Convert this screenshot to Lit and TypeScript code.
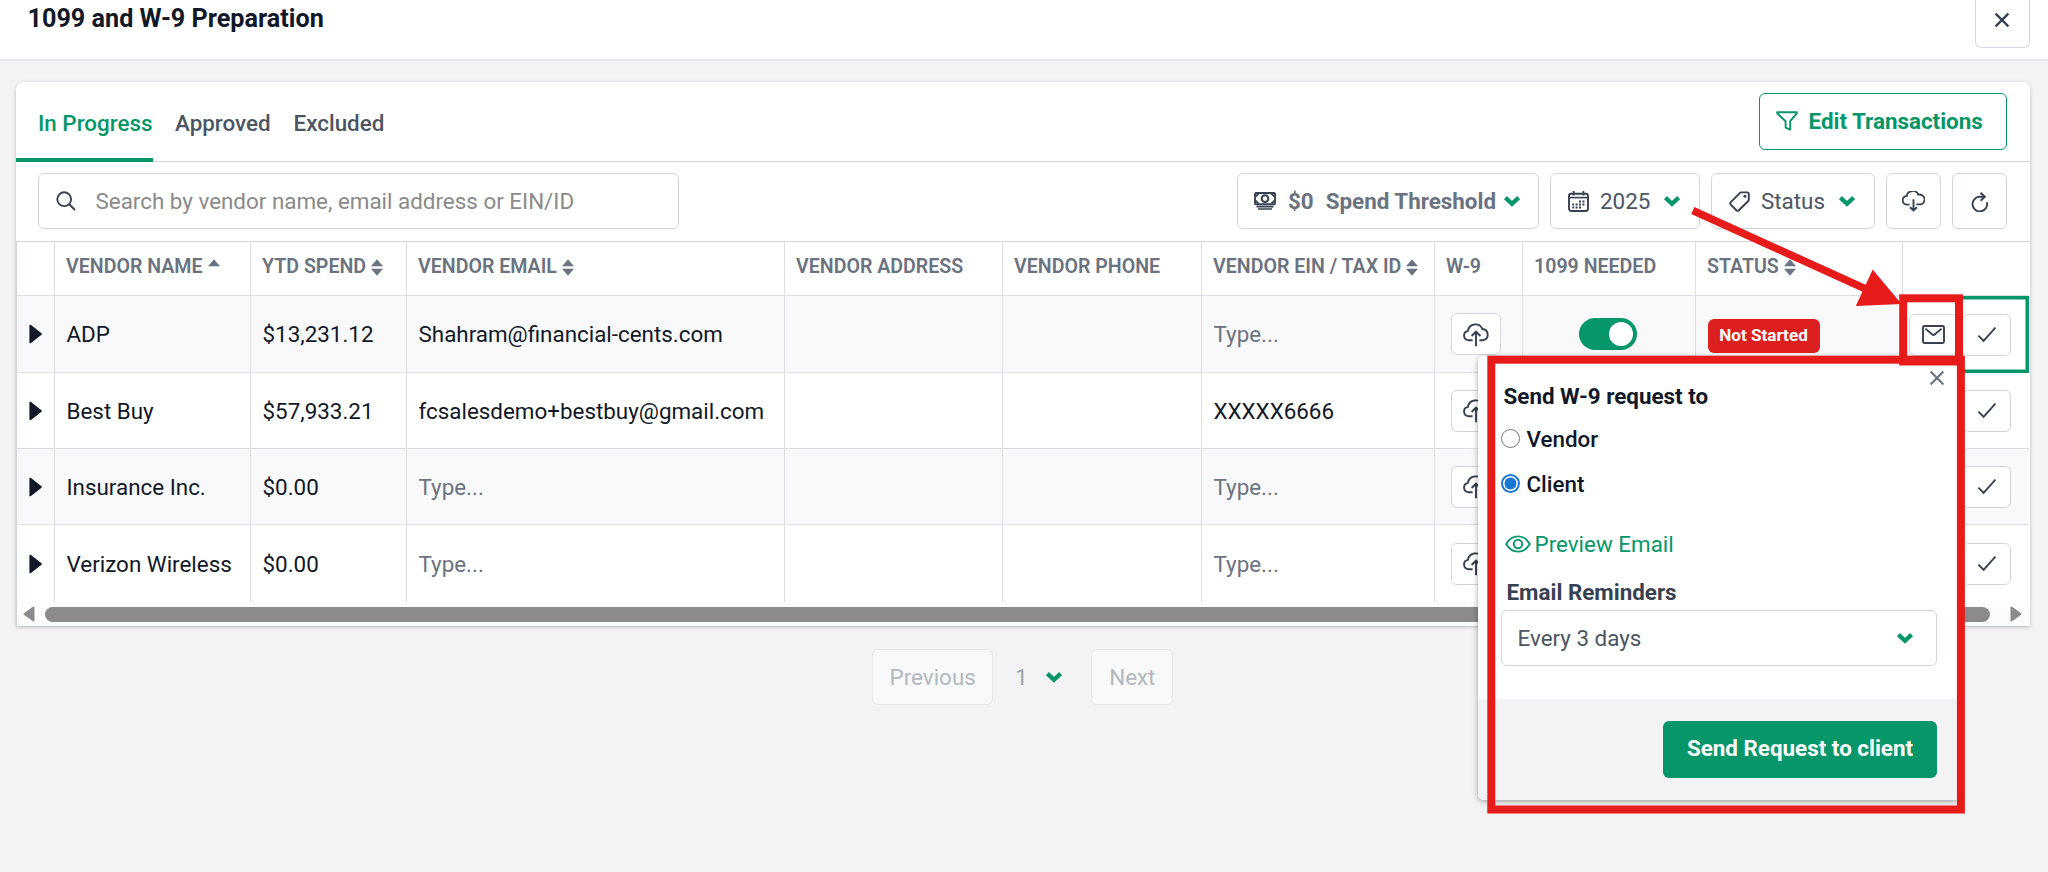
import { LitElement, html, css, svg, nothing } from "lit";
import { customElement } from "lit/decorators.js";
import { classMap } from "lit/directives/class-map.js";

const chevron = html`<svg class="chev" width="18" height="12" viewBox="0 0 18 12">
  <path d="M2.4 2.6 9 8.8 15.6 2.6" fill="none" stroke="#059669" stroke-width="4.2" stroke-linejoin="miter" />
</svg>`;

const icon = (name: string, w: number, h: number, body: unknown, vb = `0 0 ${w} ${h}`) =>
  html`<svg class="ico ${name}" width=${w} height=${h} viewBox=${vb}>${body}</svg>`;

const cross = (size: number, sw: number) =>
  icon("cross", size, size, svg`<path d="M1.5 1.5 13.5 13.5M13.5 1.5 1.5 13.5" stroke-width=${sw} />`, "0 0 15 15");

const cloudPath = "M8 15H5.6a4.4 4.4 0 0 1-.6-8.8A6.3 6.3 0 0 1 17 4.8a5.1 5.1 0 0 1 2.6 10.1H15";

const icons = {
  search: icon("", 20, 20, svg`<circle cx="8.2" cy="8.2" r="6.9" /><path d="M13 13l6 6" />`),
  filter: icon("", 22, 20, svg`<path d="M1.2 1.2h19.6v1.2l-6.6 7.8v8.4l-4.6-2v-6.4L1.2 2.4z" stroke-linejoin="round" />`),
  cash: icon("", 22, 18, svg`<rect x="1" y="1" width="20" height="11.2" rx="1" />
    <circle cx="11" cy="6.6" r="3.3" stroke-width="2" />
    <path d="M1.6 4.6 4.6 1.6M20.4 4.6 17.4 1.6M1.6 8.6 4.6 11.6M20.4 8.6 17.4 11.6" stroke-width="1.8" />
    <path d="M2.5 14.6h17M4 17h14" stroke-width="1.7" />`),
  calendar: icon("", 21, 21, svg`<rect x="1" y="2.8" width="19" height="17.2" rx="2.2" />
    <path d="M1.4 6.6h18.2" stroke-width="1.6"/><path d="M5.6 0v4.4M15.4 0v4.4" />
    <path d="M11 10.4h6.6M4.2 13.4h13.4M4.2 16.6h10.2" stroke-width="2" stroke-dasharray="2 1.4" />`),
  tag: icon("", 21, 21, svg`<path d="M12.2 1.4h6.2a1.4 1.4 0 0 1 1.4 1.4v6a1.6 1.6 0 0 1-.5 1.2L9.6 19.5a1.4 1.4 0 0 1-2 0L1.6 13.4a1.4 1.4 0 0 1 0-2L11 1.9a1.8 1.8 0 0 1 1.2-.5z" />
    <circle cx="15.9" cy="5.2" r="1.5" fill="currentColor" stroke="none" />`),
  download: icon("", 23, 21, svg`<path d=${cloudPath} transform="translate(-.2 -1) scale(.97)" /><path d="M11.5 8.2v11M8 16.2l3.5 3.3 3.5-3.3" />`),
  upload: icon("", 26, 25, svg`<path d="M9.6 18.2H5.4a4.7 4.7 0 0 1-.5-9.3A7.6 7.6 0 0 1 19.4 7a5.7 5.7 0 0 1 1 11.2h-4" /><path d="M13 24.2V10M8.6 14 13 9.7l4.4 4.3" />`),
  refresh: icon("", 18, 21, svg`<path d="M15.9 10.5A7.3 7.3 0 1 1 8.6 5h4.6" transform="translate(0 .8)" /><path d="M9.6 1.8 13.8 5.8 9.6 9.8" />`),
  mail: icon("", 23, 19, svg`<rect x="1" y="1" width="21" height="17" rx="1.4" /><path d="M3.4 3.6 10 9.2a2.2 2.2 0 0 0 3 0l6.6-5.6" />`),
  check: icon("", 20, 17, svg`<path d="M1.4 9.6 6.6 14.8 18.4 1.6" />`),
  eye: icon("", 26, 18, svg`<path d="M1.2 9C4 4.2 8.2 1.4 13 1.4S22 4.2 24.8 9C22 13.8 17.8 16.6 13 16.6S4 13.8 1.2 9z" /><circle cx="13" cy="9" r="4.2" />`),
};

const sort = (both: boolean) => html`<svg class="sort" width="12" height="17" viewBox="0 0 12 17">
  <path d="M6 .2 12 7.2H0z" />${both ? svg`<path d="M6 16.8 12 9.8H0z" />` : nothing}
</svg>`;

interface Column { label: string; sort?: "asc" | "both" }
const columns: Column[] = [
  { label: "" },
  { label: "Vendor Name", sort: "asc" },
  { label: "YTD Spend", sort: "both" },
  { label: "Vendor Email", sort: "both" },
  { label: "Vendor Address" },
  { label: "Vendor Phone" },
  { label: "Vendor EIN / Tax ID", sort: "both" },
  { label: "W-9" },
  { label: "1099 Needed" },
  { label: "Status", sort: "both" },
  { label: "" },
];

const vendors = [
  { name: "ADP", spend: "$13,231.12", email: "Shahram@financial-cents.com", ein: "" },
  { name: "Best Buy", spend: "$57,933.21", email: "fcsalesdemo+bestbuy@gmail.com", ein: "XXXXX6666" },
  { name: "Insurance Inc.", spend: "$0.00", email: "", ein: "" },
  { name: "Verizon Wireless", spend: "$0.00", email: "", ein: "" },
];

@customElement("app-root")
export class AppRoot extends LitElement {
  static styles = css`
    :host {
      display: block; position: relative; height: 872px; overflow: hidden;
      background: #f3f3f5; color: #111827;
      font: 400 22.4px/28px Roboto, sans-serif;
    }
    * { box-sizing: border-box; }
    svg { display: block; flex: none; }
    .ico { fill: none; stroke: currentColor; stroke-width: 1.9; }
    .page-head {
      display: flex; justify-content: space-between; height: 61px;
      padding: 0 18px 0 27.5px; background: #fff; border-bottom: 2px solid #e7e7ea;
    }
    h1 { margin: 5px 0 0; font-size: 25.2px; line-height: 28px; font-weight: 700; }
    .close {
      width: 55px; height: 48px; border: 1px solid #d6d8de; border-top: 0;
      border-radius: 0 0 6px 6px; color: #374151;
      display: flex; justify-content: center; padding: 12px 1px 0 0;
    }
    .card {
      margin: 21px 18px 0 16px; background: #fff; border-radius: 7px 7px 0 0;
      box-shadow: 0 1px 4px rgba(0,0,0,.18), 0 1px 2px rgba(0,0,0,.08);
    }
    .tabs {
      display: flex; height: 80px; border-bottom: 1px solid #d1d5db;
      padding-right: 23px; gap: 23px; font-weight: 500; color: #4b5563; white-space: nowrap;
    }
    .tab { padding-top: 27px; height: 80px; }
    .tab.on { padding-left: 22px; color: #059669; border-bottom: 4px solid #059669; width: 137px; margin-right: -1px; }
    .btn {
      display: flex; align-items: center; height: 56px; background: #fff;
      border: 1px solid #d1d5db; border-radius: 6px; white-space: nowrap; color: #4b5563;
    }
    .edit {
      margin: 11px 0 0 auto; width: 248px; height: 57px; padding: 0 0 1px 15.5px; gap: 11px;
      color: #059669; border-color: #059669; font-weight: 700;
    }
    .toolbar { display: flex; height: 79px; padding: 11px 23px 0 22px; gap: 11px; }
    .search { width: 641px; padding: 0 17px; gap: 19.5px; color: #8a8a8a; margin-right: auto; }
    .search .ico, .drop .ico, .sq .ico { color: #374151; }
    .drop { padding-left: 16px; color: #4b5563; }
    .spend { width: 302px; font-weight: 700; color: #6b7280; }
    .spend span { margin-left: 12px; }
    .spend .chev { margin-left: 7px; }
    .year { width: 150px; padding-left: 17px; }
    .year span { margin: 0 13px 0 11px; }
    .stat { width: 164px; padding-left: 17px; }
    .stat span { margin: 0 13px 0 11px; }
    .sq { width: 55px; justify-content: center; }
    .table {
      display: grid; border-top: 1px solid #d1d5db; border-left: 1px solid #d1d5db;
      grid-template-columns: 38px 196px 156px 378px 218px 199px 233px 88px 173px 207px 126px;
      grid-template-rows: 54px 77px 76px 76px 77px;
    }
    .cell {
      display: flex; align-items: center; padding-left: 11.5px; white-space: nowrap;
      border-right: 1px solid #dcdee3; border-bottom: 1px solid #dcdee3; min-width: 0;
    }
    .cell.head {
      font-size: 19.6px; font-weight: 600; color: #6b7280; text-transform: uppercase;
      padding-bottom: 3px; gap: 5px; padding-left: 11px;
    }
    .cell.even { background: #f9f9fb; }
    .cell.last { border-bottom: 0; }
    .cell.edge { border-right: 0; }
    .cell.act { padding-left: 6px; gap: 4px; }
    .cell.hot { background: #fff; box-shadow: inset 0 0 0 3.5px #059669; border-bottom: 0; }
    .cell.need { justify-content: center; padding: 0; }
    .ph { color: #6b7280; }
    .sort path { fill: #6b7280; }
    .mini {
      display: flex; align-items: center; justify-content: center; width: 49px; height: 42px;
      border: 1px solid #d1d5db; border-radius: 6px; background: #fff; color: #374151;
    }
    .mini.up { margin-left: 4.5px; width: 50px; }
    .toggle {
      width: 58px; height: 32px; border-radius: 16px; background: #059669;
      display: flex; justify-content: flex-end; align-items: center; padding-right: 4px; margin-right: 2px;
    }
    .toggle i { width: 24px; height: 24px; border-radius: 50%; background: #fff; }
    .badge {
      margin-top: 3px; height: 34px; width: 112px; border-radius: 6px; background: #dc1f1f;
      color: #fff; font-size: 17.1px; line-height: 33px; font-weight: 700; text-align: center;
    }
    .scroll {
      display: flex; align-items: center; height: 24px; background: #fbfcfc; padding: 0 8px 0 6px; gap: 10px;
      border-left: 1px solid #d1d5db;
    }
    .thumb { flex: 1; height: 15px; border-radius: 8px; background: #8b8b8b; margin-right: 10px; }
    .pager { display: flex; justify-content: center; align-items: center; margin: 23px 0 0; padding-right: 2.5px; height: 56px; color: #9ca3af; }
    .pager .btn { background: #f9f9fb; border-color: #e5e7eb; color: #b3b7be; justify-content: center; }
    .prev { width: 121px; }
    .next { width: 82px; }
    .pager .num { margin: 0 17px 0 22px; }
    .pager .chev { margin-right: 28.5px; }

    .popup {
      position: absolute; left: 1478px; top: 356px; width: 482px; height: 444px; z-index: 2;
      display: flex; flex-direction: column; background: #fff; border-radius: 6px; overflow: hidden;
    }
    .shade {
      position: absolute; left: 1478px; top: 356px; width: 482px; height: 444px; z-index: 1;
      border-radius: 6px; box-shadow: 0 1px 5px rgba(0,0,0,.3), 0 4px 10px rgba(0,0,0,.08);
    }
    .pbody { height: 343px; padding: 15px 23px 0 23px; }
    .ptop { display: flex; justify-content: space-between; align-items: flex-start; height: 45px; }
    .ptitle { margin: 11px 0 0 2.5px; font-weight: 700; }
    .ptop .cross { color: #6b7280; margin: -1px -8px 0 0; }
    .radio { display: flex; align-items: center; height: 45px; gap: 6.5px; font-weight: 500; }
    .dot { width: 19px; height: 19px; border-radius: 50%; border: 1.5px solid #767676; background: #fff; }
    .dot.on { border: 2px solid #1976d2; background: radial-gradient(circle, #1976d2 5.6px, #fff 6.3px); }
    .preview { display: flex; align-items: center; gap: 4px; margin: 24px 0 0 3.5px; color: #059669; height: 27px; }
    .lab { margin: 20.5px 0 0 5.5px; font-weight: 700; color: #374151; height: 28px; }
    .select { margin-top: 4.5px; padding: 0 22px 0 15.5px; justify-content: space-between; color: #4b5563; }
    .pfoot { flex: 1; background: #f3f3f5; padding: 22px 23px 0 0; }
    .send {
      margin-left: auto; width: 274px; height: 57px; border-radius: 6px; background: #059669;
      color: #fff; font-weight: 700; text-align: center; line-height: 55px;
    }
    .marks { position: absolute; left: 0; top: 0; z-index: 3; }
  `;

  private cells(v: (typeof vendors)[number], i: number) {
    const k = (extra = "") => `cell ${i % 2 === 0 ? "even" : ""} ${i === 3 ? "last" : ""} ${extra}`;
    const text = (t: string) => (t ? html`<span>${t}</span>` : html`<span class="ph">Type...</span>`);
    return html`
      <div class=${k()}>
        <svg width="13" height="20" viewBox="0 0 13 20">
          <path d="M1.2 1.5v17L12 10z" fill="#111827" stroke="#111827" stroke-width="1.6" stroke-linejoin="round" />
        </svg>
      </div>
      <div class=${k()}>${v.name}</div>
      <div class=${k()}>${v.spend}</div>
      <div class=${k()}>${text(v.email)}</div>
      <div class=${k()}></div>
      <div class=${k()}></div>
      <div class=${k()}>${text(v.ein)}</div>
      <div class=${k()}><span class="mini up">${icons.upload}</span></div>
      <div class=${k("need")}><span class="toggle"><i></i></span></div>
      <div class=${k()}><span class="badge">Not Started</span></div>
      <div class=${k("act edge" + (i === 0 ? " hot" : ""))}>
        <span class="mini">${icons.mail}</span><span class="mini">${icons.check}</span>
      </div>`;
  }

  render() {
    return html`
      <header class="page-head">
        <h1>1099 and W-9 Preparation</h1>
        <div class="close">${cross(16, 2.2)}</div>
      </header>
      <section class="card">
        <div class="tabs">
          <div class="tab on">In Progress</div>
          <div class="tab">Approved</div>
          <div class="tab">Excluded</div>
          <div class="btn edit">${icons.filter}<span>Edit Transactions</span></div>
        </div>
        <div class="toolbar">
          <div class="btn search">${icons.search}<span>Search by vendor name, email address or EIN/ID</span></div>
          <div class="btn drop spend">${icons.cash}<span>$0</span><span>Spend Threshold</span>${chevron}</div>
          <div class="btn drop year">${icons.calendar}<span>2025</span>${chevron}</div>
          <div class="btn drop stat">${icons.tag}<span>Status</span>${chevron}</div>
          <div class="btn sq">${icons.download}</div>
          <div class="btn sq">${icons.refresh}</div>
        </div>
        <div class="table">
          ${columns.map(
            (c, i) => html`<div class=${classMap({ cell: true, head: true, edge: i === columns.length - 1 })}>
              <span>${c.label}</span>${c.sort ? sort(c.sort === "both") : nothing}
            </div>`
          )}
          ${vendors.map((v, i) => this.cells(v, i))}
        </div>
        <div class="scroll">
          <svg width="12" height="16" viewBox="0 0 12 16"><path d="M10.5 1.5v13L1.5 8z" fill="#8b8b8b" stroke="#8b8b8b" stroke-width="2" stroke-linejoin="round" /></svg>
          <div class="thumb"></div>
          <svg width="12" height="16" viewBox="0 0 12 16"><path d="M1.5 1.5v13l9-6.5z" fill="#8b8b8b" stroke="#8b8b8b" stroke-width="2" stroke-linejoin="round" /></svg>
        </div>
      </section>
      <nav class="pager">
        <div class="btn prev">Previous</div>
        <span class="num">1</span>${chevron}
        <div class="btn next">Next</div>
      </nav>

      <div class="shade"></div>
      <aside class="popup">
        <div class="pbody">
          <div class="ptop"><div class="ptitle">Send W-9 request to</div>${cross(16, 2)}</div>
          <div class="radio"><span class="dot"></span>Vendor</div>
          <div class="radio"><span class="dot on"></span>Client</div>
          <div class="preview">${icons.eye}<span>Preview Email</span></div>
          <div class="lab">Email Reminders</div>
          <div class="btn select"><span>Every 3 days</span>${chevron}</div>
        </div>
        <div class="pfoot"><div class="send">Send Request to client</div></div>
      </aside>

      <svg class="marks" width="2048" height="872" viewBox="0 0 2048 872">
        <g fill="none" stroke="#e81b1b">
          <path d="M1692.8 210.5 1868 290" stroke-width="7.6" />
          <rect x="1903.2" y="298.3" width="55.8" height="63.2" stroke-width="8" />
          <rect x="1491.3" y="359.7" width="469.6" height="449.8" stroke-width="8" />
        </g>
        <path d="M1872.7 269.5 1901.5 304 1855.8 306z" fill="#e81b1b" />
      </svg>
    `;
  }
}
